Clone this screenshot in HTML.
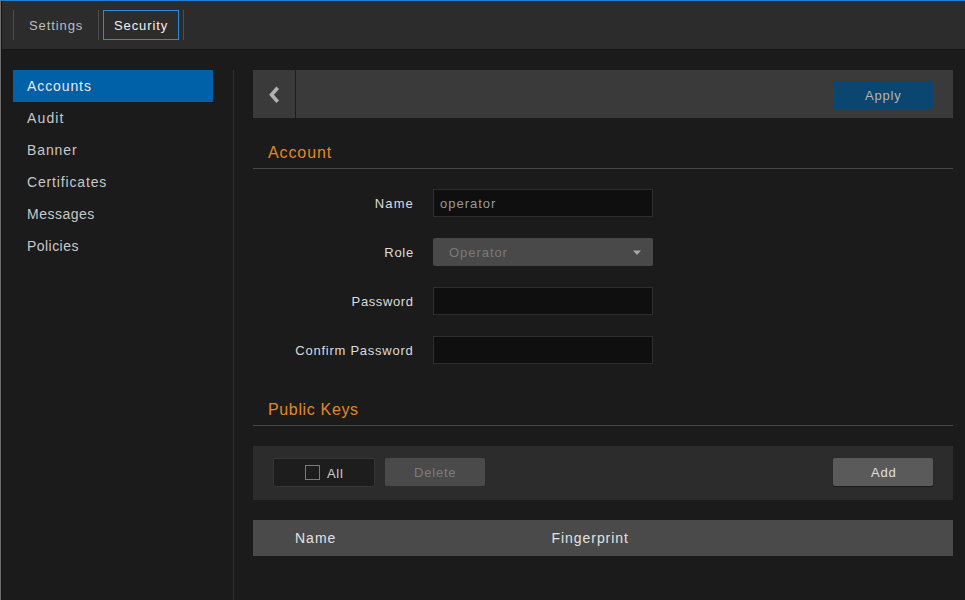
<!DOCTYPE html>
<html><head><meta charset="utf-8">
<style>
*{margin:0;padding:0;box-sizing:border-box}
html,body{width:965px;height:600px;overflow:hidden;background:#1b1b1b;font-family:"Liberation Sans",sans-serif}
.a{position:absolute}
.t{position:absolute;white-space:nowrap;line-height:1;-webkit-text-stroke:0}
#topline{left:0;top:0;width:965px;height:1px;background:#1f7fd4}
#header{left:0;top:1px;width:965px;height:48px;background:#2c2c2c}
#lborder{left:0;top:0;width:1px;height:600px;background:#6e6e6e;z-index:5}
#lborder2{left:1px;top:1px;width:1px;height:599px;background:#161616;z-index:5}
.sep{width:1px;height:30px;top:10px;background:#4e4e4e}
#secbox{left:103px;top:10px;width:76px;height:30px;border:1px solid #2a8ae0}
.tab{font-size:13px;letter-spacing:0.9px}
#side-hl{left:13px;top:70px;width:200px;height:32px;background:#0060a8}
.side{font-size:14px;letter-spacing:0.9px;color:#c8c8c8}
#vdiv{left:233px;top:70px;width:1px;height:530px;background:#303030}
#tb{left:253px;top:70px;width:700px;height:48px;background:#3a3a3a}
#tbsep{left:295px;top:70px;width:1px;height:48px;background:#1c1c1c}
#apply{left:833px;top:81px;width:100px;height:28px;background:#0a4670;border-radius:2px}
.h{font-size:16px;color:#e0882c;letter-spacing:0.75px;-webkit-text-stroke:0}
.hl{left:253px;width:700px;height:1px;background:#474747}
.lbl{font-size:13px;color:#dcdcdc;letter-spacing:0.75px;text-align:right}
.inp{left:433px;width:220px;height:28px;background:#0f0f0f;border:1px solid #2e2e2e}
#role{left:433px;top:238px;width:220px;height:28px;background:#494949;border-radius:2px}
#tb2{left:253px;top:446px;width:700px;height:54px;background:#2c2c2c}
#allbox{left:273px;top:458px;width:102px;height:29px;background:#1d1d1d;border:1px solid #363636;border-radius:2px}
#chk{left:305px;top:465px;width:15px;height:15px;border:1px solid #7a7a7a}
#del{left:385px;top:458px;width:100px;height:28px;background:#4a4a4a;border-radius:2px}
#add{left:833px;top:458px;width:100px;height:28px;background:#5a5a5a;border-radius:2px;box-shadow:0 1px 1px rgba(0,0,0,.4)}
#thead{left:253px;top:520px;width:700px;height:36px;background:#4a4a4a}
</style></head><body>
<div class="a" id="header"></div>
<div class="a" id="topline"></div>
<div class="a" id="lborder"></div><div class="a" id="lborder2"></div>
<div class="a" style="left:0;top:49px;width:965px;height:1px;background:#161616"></div>
<div class="a sep" style="left:13px"></div>
<div class="a sep" style="left:98px"></div>
<div class="a sep" style="left:183px"></div>
<div class="a" id="secbox"></div>
<div class="t tab" style="left:29px;top:19px;color:#bdbdbd">Settings</div>
<div class="t tab" style="left:114px;top:19px;color:#f0f0f0">Security</div>

<div class="a" id="side-hl"></div>
<div class="t side" style="left:27px;top:79px;color:#e8e8e8">Accounts</div>
<div class="t side" style="left:27px;top:111px;letter-spacing:1.15px">Audit</div>
<div class="t side" style="left:27px;top:143px">Banner</div>
<div class="t side" style="left:27px;top:175px;letter-spacing:0.85px">Certificates</div>
<div class="t side" style="left:27px;top:207px;letter-spacing:0.5px">Messages</div>
<div class="t side" style="left:27px;top:239px;letter-spacing:0.45px">Policies</div>
<div class="a" id="vdiv"></div>

<div class="a" id="tb"></div>
<div class="a" id="tbsep"></div>
<svg class="a" style="left:266px;top:84px" width="16" height="22" viewBox="0 0 16 22">
<polyline points="11.7,3.8 5.5,10.8 11.7,17.8" fill="none" stroke="#b0b0b0" stroke-width="3.6" stroke-linejoin="miter"/>
</svg>
<div class="a" id="apply"></div>
<div class="t" style="left:865px;top:89px;font-size:13px;color:#b4b4b4;letter-spacing:0.8px">Apply</div>

<div class="t h" style="left:268px;top:145px;letter-spacing:0.9px">Account</div>
<div class="a hl" style="top:168px"></div>

<div class="t lbl" style="right:551px;top:197px;letter-spacing:1.15px">Name</div>
<div class="a inp" style="top:189px"></div>
<div class="t" style="left:440px;top:197px;font-size:13px;color:#9a9a9a;letter-spacing:1px">operator</div>

<div class="t lbl" style="right:551px;top:246px">Role</div>
<div class="a" id="role"></div>
<div class="t" style="left:449px;top:246px;font-size:13px;color:#7a7a7a;letter-spacing:0.95px">Operator</div>
<svg class="a" style="left:632px;top:249.5px" width="10" height="6" viewBox="0 0 10 6"><polygon points="1,0.5 9,0.5 5,5" fill="#a8a8a8"/></svg>

<div class="t lbl" style="right:551.5px;top:295px;letter-spacing:0.6px">Password</div>
<div class="a inp" style="top:287px"></div>

<div class="t lbl" style="right:551.5px;top:344px">Confirm Password</div>
<div class="a inp" style="top:336px"></div>

<div class="t h" style="left:268px;top:402px;letter-spacing:0.65px">Public Keys</div>
<div class="a hl" style="top:425px"></div>

<div class="a" id="tb2"></div>
<div class="a" id="allbox"></div>
<div class="a" id="chk"></div>
<div class="t" style="left:327px;top:467px;font-size:13px;color:#cfcfcf;letter-spacing:0.7px">All</div>
<div class="a" id="del"></div>
<div class="t" style="left:414px;top:466px;font-size:13px;color:#7c7c7c;letter-spacing:0.8px">Delete</div>
<div class="a" id="add"></div>
<div class="t" style="left:871px;top:466px;font-size:13px;color:#e0e0e0;letter-spacing:0.8px">Add</div>

<div class="a" id="thead"></div>
<div class="t" style="left:295px;top:531px;font-size:14px;color:#e2e2e2;letter-spacing:1px">Name</div>
<div class="t" style="left:551.5px;top:531px;font-size:14px;color:#e2e2e2;letter-spacing:0.95px">Fingerprint</div>
</body></html>
